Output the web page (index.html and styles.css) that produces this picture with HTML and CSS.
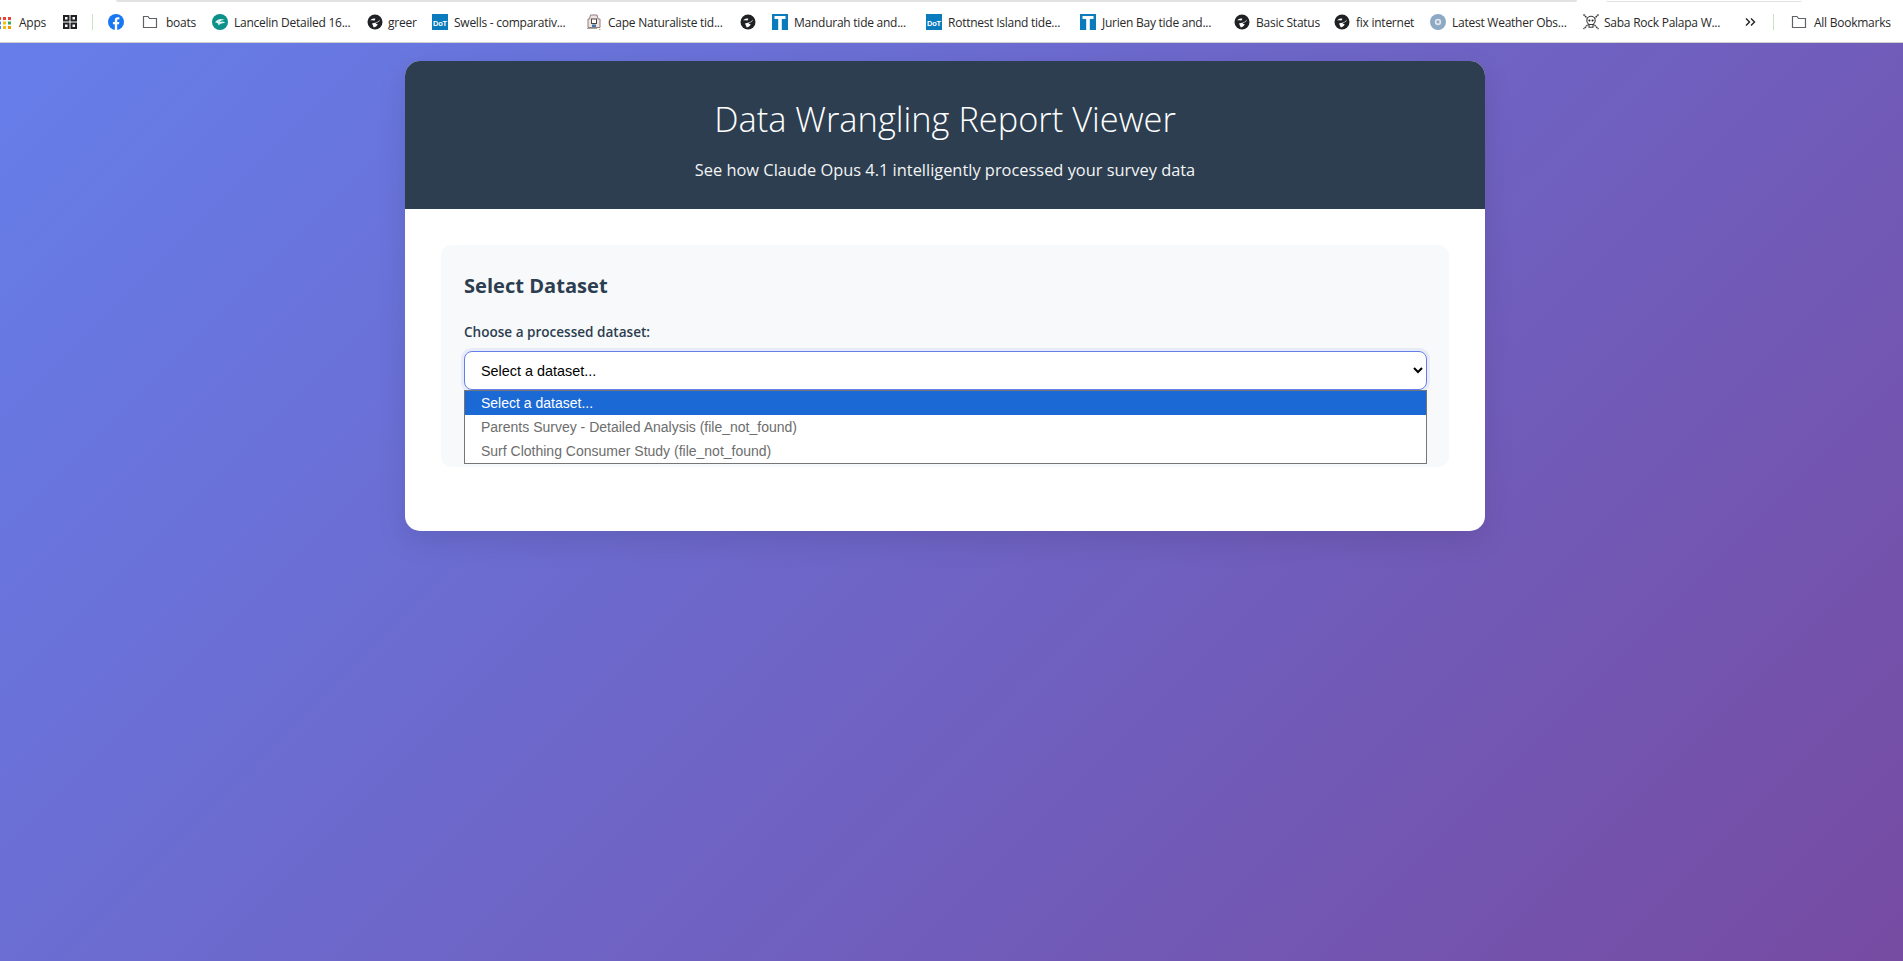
FILE: index.html
```html
<!DOCTYPE html>
<html lang="en">
<head>
    <meta charset="UTF-8">
    <meta name="viewport" content="width=device-width, initial-scale=1.0">
    <title>Data Wrangling Report Viewer</title>
    <link rel="stylesheet" href="styles.css">
</head>
<body>
<!-- Icons used more than once -->
<svg class="sprites" width="0" height="0">
    <symbol id="globe" viewBox="0 0 16 16">
        <circle cx="8" cy="8" r="7.5" fill="#202124"/>
        <path d="M3.2 6.5 C4.5 4.6 6.5 4 8.5 4.8 L7.2 6.8 C6 6.2 4.6 6.2 3.2 6.5 Z M13 5.5 C12.4 8.5 9.5 8.5 8.5 9.5 L10.8 10.5 C9.8 12.2 8.5 13 6.8 13.4 L5 9.5 C7.5 9 11 8.5 13 5.5 Z" fill="#fff"/>
    </symbol>
    <symbol id="folder" viewBox="0 0 16 16">
        <path d="M1.5 2.5 H6 L7.5 4.5 H14.5 V13.5 H1.5 Z" fill="none" stroke="#5f6368" stroke-width="1.2"/>
    </symbol>
    <symbol id="tee" viewBox="0 0 16 16">
        <rect width="16" height="16" fill="#0a7bbd"/>
        <path d="M2.5 2 H13.5 V5 H9.8 V16 H6.2 V5 H2.5 Z" fill="#fff"/>
    </symbol>
</svg>

<div class="window-edge">
    <i class="edge-tab"></i>
    <i class="edge-field"></i>
</div>

<div class="bookmarks">
    <a class="mark mark-apps" href="#">
        <svg class="ico-apps" viewBox="0 0 13 13">
            <rect x="-2" y="1" width="3" height="3" fill="#ea4335"/><rect x="3" y="1" width="3" height="3" fill="#ea4335"/><rect x="8" y="1" width="3" height="3" fill="#ea4335"/>
            <rect x="-2" y="5.5" width="3" height="3" fill="#4285f4"/><rect x="3" y="5.5" width="3" height="3" fill="#fbbc04"/><rect x="8" y="5.5" width="3" height="3" fill="#34a853"/>
            <rect x="-2" y="10" width="3" height="3" fill="#4285f4"/><rect x="3" y="10" width="3" height="3" fill="#fbbc04"/><rect x="8" y="10" width="3" height="3" fill="#f29900"/>
        </svg>
        <span>Apps</span>
    </a>
    <svg class="ico" viewBox="0 0 16 16" fill="none" stroke="#202124" stroke-width="2">
        <rect x="2" y="2" width="4.5" height="4.5"/><rect x="9.5" y="2" width="4.5" height="4.5"/>
        <rect x="2" y="9.5" width="4.5" height="4.5"/><rect x="9.5" y="9.5" width="4.5" height="4.5"/>
    </svg>
    <i class="sep sep-first"></i>
    <svg class="ico ico-fb" viewBox="0 0 16 16">
        <circle cx="8" cy="8" r="8" fill="#1877f2"/>
        <path d="M6.8 16 V10.3 H4.9 V8 H6.8 V6.3 C6.8 4.3 8 3.2 9.8 3.2 C10.6 3.2 11.4 3.3 11.4 3.3 V5.2 H10.4 C9.5 5.2 9.2 5.8 9.2 6.4 V8 H11.3 L11 10.3 H9.2 V16 Z" fill="#fff"/>
    </svg>
    <a class="mark mark-boats" href="#"><svg class="ico"><use href="#folder"/></svg><span>boats</span></a>
    <a class="mark mark-lancelin" href="#">
        <svg class="ico" viewBox="0 0 16 16">
            <circle cx="8" cy="8" r="8" fill="#0d8f8a"/>
            <path d="M3 8.5 C5 5 9 4 12.5 6 C10 5.8 8.5 6.8 8 8 C10 7 12 7.5 13.5 9 C10.5 8.6 8 9.5 6.5 11.5 C6.5 9.5 5 8.4 3 8.5 Z" fill="#d8f2ef"/>
        </svg>
        <span>Lancelin Detailed 16...</span>
    </a>
    <a class="mark mark-greer" href="#"><svg class="ico"><use href="#globe"/></svg><span>greer</span></a>
    <a class="mark mark-wide" href="#">
        <svg class="ico" viewBox="0 0 16 16">
            <rect width="16" height="16" fill="#0a7bbd"/>
            <text x="8" y="11.5" class="dot-text" text-anchor="middle">DoT</text>
        </svg>
        <span>Swells - comparativ...</span>
    </a>
    <a class="mark mark-wide" href="#">
        <svg class="ico" viewBox="0 0 16 16">
            <path d="M4.5 1 H11 L12 5 H14 V13.5 H2 V5 H3.5 Z" fill="#f0e4e2" stroke="#8d7f7a" stroke-width="1"/>
            <rect x="5.5" y="5" width="5" height="4.5" fill="#fff" stroke="#4d4846" stroke-width="1"/>
            <rect x="6" y="10.5" width="4" height="2.5" fill="#3f78a8"/>
            <path d="M1 14.5 H11 M13 15.5 H14.5" stroke="#a9a09a" stroke-width="1"/>
        </svg>
        <span>Cape Naturaliste tid...</span>
    </a>
    <a class="mark mark-icononly" href="#"><svg class="ico"><use href="#globe"/></svg></a>
    <a class="mark mark-wide" href="#"><svg class="ico"><use href="#tee"/></svg><span>Mandurah tide and...</span></a>
    <a class="mark mark-wide" href="#">
        <svg class="ico" viewBox="0 0 16 16">
            <rect width="16" height="16" fill="#0a7bbd"/>
            <text x="8" y="11.5" class="dot-text" text-anchor="middle">DoT</text>
        </svg>
        <span>Rottnest Island tide...</span>
    </a>
    <a class="mark mark-wide" href="#"><svg class="ico"><use href="#tee"/></svg><span>Jurien Bay tide and...</span></a>
    <a class="mark mark-basic" href="#"><svg class="ico"><use href="#globe"/></svg><span>Basic Status</span></a>
    <a class="mark mark-fix" href="#"><svg class="ico"><use href="#globe"/></svg><span>fix internet</span></a>
    <a class="mark mark-weather" href="#">
        <svg class="ico" viewBox="0 0 16 16">
            <circle cx="8" cy="8" r="8" fill="#8ea9c4"/>
            <circle cx="8" cy="8" r="3.2" fill="#dfe6ee"/>
            <circle cx="8" cy="8" r="1.4" fill="#8ea9c4"/>
        </svg>
        <span>Latest Weather Obs...</span>
    </a>
    <a class="mark mark-saba" href="#">
        <svg class="ico" viewBox="0 0 16 16" fill="none" stroke="#3a3a3a" stroke-width="1.5" stroke-dasharray="1.6 0.6">
            <path d="M0.5 0.5 L15.5 15 M15.5 0.5 L0.5 15"/>
            <circle cx="8" cy="6.5" r="4.2" fill="#fff" stroke-width="1.1" stroke-dasharray="none"/>
            <path d="M6 10.5 H10 V13.2 H6 Z" fill="#fff" stroke-width="1.1" stroke-dasharray="none"/>
            <circle cx="6.4" cy="6.5" r="1.1" fill="#222" stroke="none"/><circle cx="9.6" cy="6.5" r="1.1" fill="#222" stroke="none"/>
        </svg>
        <span>Saba Rock Palapa W...</span>
    </a>
    <svg class="ico-more" viewBox="0 0 11 10" fill="none" stroke="#202124" stroke-width="1.4">
        <path d="M1 1.5 L4.5 5 L1 8.5 M6 1.5 L9.5 5 L6 8.5"/>
    </svg>
    <i class="sep sep-last"></i>
    <a class="mark mark-all" href="#"><svg class="ico"><use href="#folder"/></svg><span>All Bookmarks</span></a>
</div>

<div class="page">
    <div class="viewer">
        <header class="viewer-head">
            <h1>Data Wrangling Report Viewer</h1>
            <p>See how Claude Opus 4.1 intelligently processed your survey data</p>
        </header>
        <div class="viewer-body">
            <section class="panel">
                <h2>Select Dataset</h2>
                <label for="dataset">Choose a processed dataset:</label>
                <div class="picker">
                    <select id="dataset">
                        <option>Select a dataset...</option>
                        <option>Parents Survey - Detailed Analysis (file_not_found)</option>
                        <option>Surf Clothing Consumer Study (file_not_found)</option>
                    </select>
                    <!-- The open list of the select -->
                    <ul class="picker-list">
                        <li class="is-active">Select a dataset...</li>
                        <li>Parents Survey - Detailed Analysis (file_not_found)</li>
                        <li>Surf Clothing Consumer Study (file_not_found)</li>
                    </ul>
                </div>
            </section>
        </div>
    </div>
</div>
</body>
</html>
```

FILE: styles.css
```css
* {
    box-sizing: border-box;
}

html, body {
    height: 100%;
}

body {
    margin: 0;
    display: flex;
    flex-direction: column;
    font-family: "Open Sans", "Noto Sans", sans-serif;
    overflow: hidden;
}

.sprites {
    position: absolute;
}

.dot-text {
    font: bold 7.5px "Liberation Sans", sans-serif;
    fill: #fff;
}

/* Bottom edge of the browser's tab strip and address field */
.window-edge {
    height: 2px;
    flex: none;
    display: flex;
    background: #fff;
}

.edge-tab {
    width: 1461px;
    margin-left: 116px;
    background: #e2e2e2;
    border-radius: 0 0 4px 4px;
}

.edge-field {
    width: 196px;
    margin-left: 29px;
    border-bottom: 1px solid #e2e2e2;
    border-radius: 0 0 4px 4px;
}

/* Bookmarks bar */
.bookmarks {
    height: 41px;
    flex: none;
    display: flex;
    align-items: center;
    background: #fff;
    border-bottom: 1px solid #d0d0d0;
    white-space: nowrap;
}

.mark {
    display: flex;
    align-items: center;
    gap: 6px;
    flex: none;
    color: #282828;
    text-decoration: none;
    font-size: 12px;
    letter-spacing: -0.25px;
}

.ico {
    width: 16px;
    height: 16px;
    flex: none;
}

.ico-apps {
    width: 13px;
    height: 13px;
    flex: none;
}

.ico-fb {
    margin-left: 15px;
}

.ico-more {
    width: 11px;
    height: 10px;
    flex: none;
}

.sep {
    width: 1px;
    height: 16px;
    flex: none;
    background: #c8e6c0;
}

.sep-first {
    margin-left: 14px;
}

.sep-last {
    margin-left: 17px;
}

/* Each mark is as wide as the distance to the next one */
.mark-apps { width: 62px; }
.mark-boats { width: 70px; margin-left: 18px; gap: 8px; }
.mark-lancelin { width: 155px; }
.mark-greer { width: 65px; gap: 5px; }
.mark-wide { width: 154px; }
.mark-icononly { width: 32px; }
.mark-basic { width: 100px; }
.mark-fix { width: 96px; }
.mark-weather { width: 153px; }
.mark-saba { width: 162px; gap: 5px; }
.mark-all { margin-left: 17px; gap: 7px; }

/* Page */
.page {
    flex: 1;
    padding: 18px 13px 0 0;
    background: linear-gradient(135deg, #667eea 0%, #764ba2 100%);
}

.viewer {
    width: 1080px;
    margin: 0 auto;
    background: #fff;
    border-radius: 15px;
    overflow: hidden;
    box-shadow: 0 10px 30px rgba(0, 0, 0, 0.1);
}

.viewer-head {
    height: 148px;
    padding-top: 34px;
    background: #2c3e50;
    color: #fff;
    text-align: center;
}

.viewer-head h1 {
    margin: 0 0 15px;
    font-size: 34.4px;
    line-height: 48px;
    font-weight: 300;
}

.viewer-head p {
    margin: 0;
    font-size: 16.4px;
    line-height: 24px;
    opacity: 0.95;
}

.viewer-body {
    padding: 36px 36px 64px;
}

.panel {
    height: 222px;
    padding: 27px 22px 0 23px;
    background: #f8f9fa;
    border-radius: 10px;
}

.panel h2 {
    margin: 0 0 22px;
    color: #2c3e50;
    font-size: 20.1px;
    line-height: 28px;
    font-weight: 700;
}

.panel label {
    display: block;
    margin-bottom: 9px;
    color: #2c3e50;
    font-size: 13.55px;
    line-height: 20px;
    font-weight: 600;
}

.picker {
    position: relative;
}

select {
    display: block;
    width: 100%;
    height: 39px;
    padding: 0 12px;
    background: #fff;
    color: #000;
    font: 14.4px "Liberation Sans", Arial, sans-serif;
    border: 1px solid #667eea;
    border-radius: 8px;
    outline: none;
    box-shadow: 0 0 0 3px rgba(102, 126, 234, 0.1);
}

.picker-list {
    position: absolute;
    top: 100%;
    left: 0;
    right: 0;
    margin: 0;
    padding: 0;
    list-style: none;
    background: #fff;
    border: 1px solid #767676;
    font: 14px "Liberation Sans", Arial, sans-serif;
    color: #6d6d6d;
}

.picker-list li {
    height: 24px;
    padding: 0 16px;
    line-height: 24px;
}

.picker-list li.is-active {
    background: #1a69d4;
    color: #fff;
}
```
